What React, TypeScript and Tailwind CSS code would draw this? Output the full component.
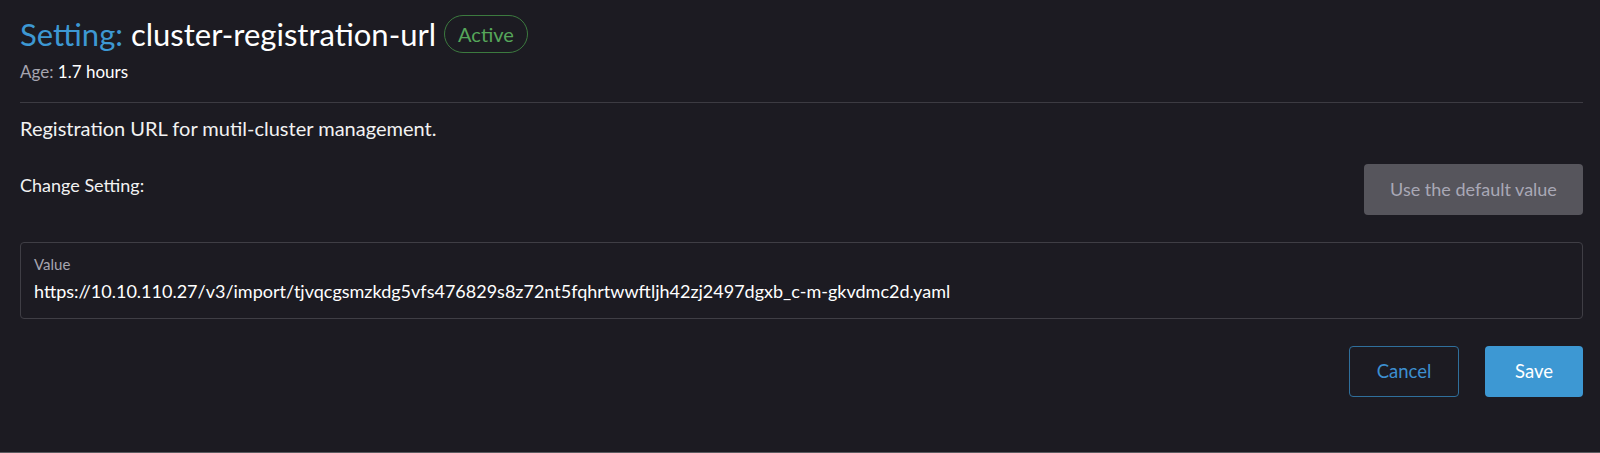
import React, { useState } from "react";

const DEFAULT_URL =
  "https://10.10.110.27/v3/import/tjvqcgsmzkdg5vfs476829s8z72nt5fqhrtwwftljh42zj2497dgxb_c-m-gkvdmc2d.yaml";

const App: React.FC = () => {
  const [value, setValue] = useState(DEFAULT_URL);

  return (
    <div
      className="min-h-[453px] bg-[#1c1b22] pl-5 pr-[17px] pt-[15px] text-white border-b border-[#5b5b60]"
      style={{ fontFamily: "Lato, 'Open Sans', sans-serif" }}
    >
      <div className="flex items-center gap-[8px]">
        <h1 className="text-[31px] leading-[38px]">
          <span className="text-[#3d98d3]">Setting:</span>{" "}
          <span className="text-white">cluster-registration-url</span>
        </h1>
        <span className="h-[38px] px-[13px] rounded-full border border-[#3c7a3f] text-[#56a65a] text-[20px] flex items-center">
          Active
        </span>
      </div>
      <div className="mt-[9px] text-[17px] leading-5">
        <span className="text-[#a6a5b0]">Age:</span> <span className="text-white">1.7 hours</span>
      </div>

      <div className="mt-[20px] h-px bg-[#3c3b42]" />

      <p className="mt-[13px] text-[20px] leading-6 text-[#f2f2f2]">
        Registration URL for mutil-cluster management.
      </p>

      <div className="mt-[24px] flex items-start justify-between">
        <div className="pt-[11px] text-[18px] leading-5 text-[#f2f2f2]">Change Setting:</div>
        <button
          onClick={() => setValue(DEFAULT_URL)}
          className="h-[51px] w-[219px] rounded bg-[#56555c] text-[18px] text-[#a9a8b6]"
        >
          Use the default value
        </button>
      </div>

      <div className="mt-[27px] h-[77px] rounded border border-[#3f3e45] px-[13px] pt-[12px]">
        <div className="text-[15px] leading-[18px] text-[#a6a5b0]">Value</div>
        <input
          value={value}
          onChange={(e) => setValue(e.target.value)}
          className="mt-[8px] w-full bg-transparent text-[18px] leading-5 text-white outline-none"
        />
      </div>

      <div className="mt-[27px] flex justify-end gap-[26px]">
        <button className="h-[51px] w-[110px] rounded border border-[#2f6f9c] text-[18.5px] text-[#3d8fd0]">
          Cancel
        </button>
        <button className="h-[51px] w-[98px] rounded bg-[#3d98d3] text-[18.5px] text-white">
          Save
        </button>
      </div>
    </div>
  );
};

export default App;
